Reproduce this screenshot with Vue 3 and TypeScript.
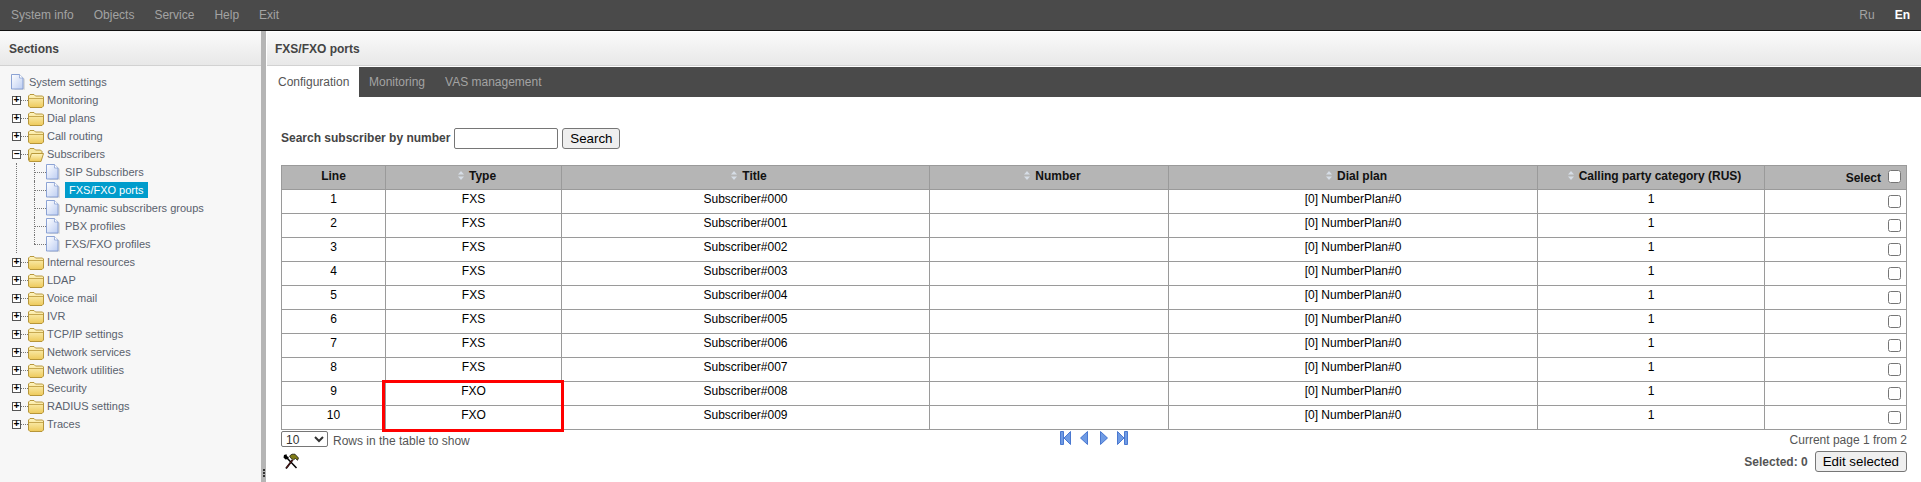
<script setup lang="ts">
const menu = ['System info', 'Objects', 'Service', 'Help', 'Exit']
const before = ['Monitoring', 'Dial plans', 'Call routing']
const children = ['SIP Subscribers', 'FXS/FXO ports', 'Dynamic subscribers groups', 'PBX profiles', 'FXS/FXO profiles']
const after = ['Internal resources', 'LDAP', 'Voice mail', 'IVR', 'TCP/IP settings', 'Network services', 'Network utilities', 'Security', 'RADIUS settings', 'Traces']
const rows = Array.from({ length: 10 }, (_, i) => ({
  line: i + 1,
  type: i < 8 ? 'FXS' : 'FXO',
  title: 'Subscriber#00' + i
}))
const cols = [
  { name: 'Line', w: 104, sort: false },
  { name: 'Type', w: 176, sort: true },
  { name: 'Title', w: 368, sort: true },
  { name: 'Number', w: 239, sort: true },
  { name: 'Dial plan', w: 369, sort: true },
  { name: 'Calling party category (RUS)', w: 227, sort: true }
]
</script>

<template>
  <div class="page">
    <header class="topbar">
      <nav class="menu"><span v-for="m in menu" :key="m">{{ m }}</span></nav>
      <div class="langs"><span>Ru</span><b>En</b></div>
    </header>
    <div class="main">
      <aside class="side">
        <div class="side-head">Sections</div>
        <div class="tree">
          <div class="row root">
            <svg class="doc" viewBox="0 0 14 16"><use href="#doc-shape" /></svg>
            <span class="lbl">System settings</span>
          </div>
          <div v-for="n in before" :key="n" class="row">
            <span class="box">+</span><i class="dots"></i>
            <svg class="folder" viewBox="0 0 16 14"><use href="#folder-shape" /></svg>
            <span class="lbl">{{ n }}</span>
          </div>
          <div class="row">
            <span class="box minus">−</span><i class="dots"></i>
            <svg class="folder" viewBox="0 0 16 14"><use href="#folder-open" /></svg>
            <span class="lbl">Subscribers</span>
          </div>
          <div class="kids">
            <div v-for="(c, i) in children" :key="c" class="kid" :class="{ last: i === children.length - 1 }">
              <i class="conn"></i>
              <svg class="doc" viewBox="0 0 14 16"><use href="#doc-shape" /></svg>
              <span class="lbl" :class="{ sel: i === 1 }">{{ c }}</span>
            </div>
          </div>
          <div v-for="n in after" :key="n" class="row">
            <span class="box">+</span><i class="dots"></i>
            <svg class="folder" viewBox="0 0 16 14"><use href="#folder-shape" /></svg>
            <span class="lbl">{{ n }}</span>
          </div>
        </div>
      </aside>
      <div class="split"><i class="grip"></i></div>
      <main class="content">
        <div class="title">FXS/FXO ports</div>
        <div class="tabs">
          <span class="tab active">Configuration</span>
          <div class="tabrest"><span class="tab">Monitoring</span><span class="tab">VAS management</span></div>
        </div>
        <div class="body">
          <form class="search" @submit.prevent>
            <b>Search subscriber by number</b>
            <input type="text" class="sinput" />
            <button class="btn sbtn">Search</button>
          </form>
          <div class="tablewrap">
            <table>
              <colgroup>
                <col v-for="c in cols" :key="c.name" :style="{ width: c.w + 'px' }" />
                <col />
              </colgroup>
              <thead>
                <tr>
                  <th v-for="c in cols" :key="c.name" :class="{ sorted: c.sort }">
                    <svg v-if="c.sort" class="sort" viewBox="0 0 6 9"><path d="M3 0 6 3.5H0zM3 9 0 5.500h6z" /></svg>{{ c.name }}
                  </th>
                  <th class="selcol"><span>Select</span><input type="checkbox" class="chk" /></th>
                </tr>
              </thead>
              <tbody>
                <tr v-for="r in rows" :key="r.line">
                  <td>{{ r.line }}</td>
                  <td>{{ r.type }}</td>
                  <td>{{ r.title }}</td>
                  <td></td>
                  <td>[0] NumberPlan#0</td>
                  <td>1</td>
                  <td class="selcell"><input type="checkbox" class="chk" /></td>
                </tr>
              </tbody>
            </table>
            <div class="mark"></div>
          </div>
          <div class="foot">
            <div class="foot-l">
              <div class="rowsel">
                <select class="pagesize"><option>10</option></select>
                <span>Rows in the table to show</span>
              </div>
              <svg class="tools" viewBox="0 0 16 16">
                <path d="M4 4.500 13.500 14.500" stroke="#000" stroke-width="1.500" fill="none" />
                <path d="M3.500 .8 1 1.500 .5 4 2.500 6 5 5.500 5.800 3.500 4 2.800z" fill="#000" />
                <path d="M9.500 6.500 3 15" stroke="#000" stroke-width="1.900" fill="none" />
                <path d="M9.500 6.500 3.300 14.500" stroke="#8c1c1c" stroke-width=".7" fill="none" />
                <path d="M6.500 2.500 9 .7 12 .7 15.500 4.500 14.500 6.800 12.500 5 10.500 6.300 8.500 5.300z" fill="#807c18" stroke="#000" stroke-width=".7" />
              </svg>
            </div>
            <div class="pager">
              <svg class="wide" viewBox="0 0 11 14"><path class="pg" d="M.5.5h3v13h-3zM10.500.5v13L4 7z" /></svg>
              <svg class="nar" viewBox="0 0 8 14"><path class="pg" d="M7.500.5v13L.5 7z" /></svg>
              <svg class="nar n2" viewBox="0 0 8 14"><path class="pg" d="M.5.5v13l7-6.500z" /></svg>
              <svg class="wide" viewBox="0 0 11 14"><path class="pg" d="M10.500.5h-3v13h3zM.5.5v13L7 7z" /></svg>
            </div>
            <div class="foot-r">
              <div class="cur">Current page 1 from 2</div>
              <div class="edit"><b>Selected: 0</b><button class="btn">Edit selected</button></div>
            </div>
          </div>
        </div>
      </main>
    </div>
    <svg class="defs" width="0" height="0">
      <defs>
        <linearGradient id="dg" x1="0" y1="0" x2="1" y2="1"><stop offset="0" stop-color="#fff" /><stop offset="1" stop-color="#bccdf2" /></linearGradient>
        <linearGradient id="fg" x1="0" y1="0" x2="0" y2="1"><stop offset="0" stop-color="#fff6c4" /><stop offset="1" stop-color="#edc95a" /></linearGradient>
        <symbol id="doc-shape" viewBox="0 0 14 16">
          <path d="M2.500 1.500h7l3.500 3.500v10.500h-10.500z" fill="#cfcfcf" opacity=".7" transform="translate(1 .3)" />
          <path d="M.5.5h8l3.500 3.500v11H.5z" fill="url(#dg)" stroke="#7f98cf" stroke-width=".9" />
          <path d="M8.500.5v3.500h3.500" fill="#fff" stroke="#7f98cf" stroke-width=".7" />
        </symbol>
        <symbol id="folder-shape" viewBox="0 0 16 14">
          <path d="M.5 12V2L2 .5h4L7.500 2h7L15.500 3v9l-1.500 1.500H2z" fill="url(#fg)" stroke="#b08d2c" stroke-width=".9" />
          <path d="M1 4.500h14" stroke="#b08d2c" stroke-width=".7" />
        </symbol>
        <symbol id="folder-open" viewBox="0 0 16 14">
          <path d="M.5 12V2L2 .5h4L7.500 2h5L14 3.500V5" fill="#f6e7a2" stroke="#b08d2c" stroke-width=".9" />
          <path d="M.8 13 3.500 5.500h12L13 13.500H2z" fill="url(#fg)" stroke="#b08d2c" stroke-width=".9" />
        </symbol>
      </defs>
    </svg>
  </div>
</template>

<style>
html, body { margin: 0; background: #fff; overflow: hidden; }
</style>

<style scoped>
.page { width: 100%; height: 482px; display: flex; flex-direction: column; overflow: hidden; font: 12px "Liberation Sans", Arial, sans-serif; color: #444; background: #fff; }
.defs { position: absolute; }
.topbar { height: 30px; flex: none; background: #4a4a4a; border-bottom: 1px solid #111; display: flex; justify-content: space-between; align-items: center; color: #a3a3a3; }
.menu { display: flex; gap: 20px; padding-left: 11px; }
.langs { display: flex; gap: 20px; padding-right: 11px; }
.langs b { color: #fff; }
.main { flex: 1; display: flex; min-height: 0; }
.side { width: 261px; flex: none; background: #f7f7f7; }
.side-head { height: 34px; margin-top: 1px; box-sizing: border-box; padding-left: 9px; line-height: 34px; font-weight: bold; color: #444; background: linear-gradient(#fafafa, #e8e8e8); border-bottom: 1px solid #d2d2d2; }
.tree { padding-top: 7px; font-size: 11px; color: #59616d; }
.row, .kid { height: 18px; display: flex; align-items: center; }
.row { padding-left: 12px; }
.row.root { padding-left: 11px; }
.box { width: 7px; height: 7px; border: 1px solid #555; background: #fff; color: #000; font: bold 10px/7px "Liberation Mono", monospace; text-align: center; flex: none; }
.dots { width: 7px; border-top: 1px dotted #777; flex: none; }
.folder { width: 16px; height: 14px; flex: none; margin-top: 1px; }
.row .lbl { margin-left: 3px; }
.row.root .lbl { margin-left: 4px; }
.doc { width: 14px; height: 16px; flex: none; }
.kids { margin-left: 16px; padding-left: 17px; border-left: 1px dotted #777; height: 90px; }
.kid { position: relative; }
.conn { width: 12px; height: 18px; flex: none; position: relative; }
.conn::before { content: ""; position: absolute; left: 0; top: 0; bottom: 0; border-left: 1px dotted #777; }
.conn::after { content: ""; position: absolute; left: 0; top: 9px; width: 12px; border-top: 1px dotted #777; }
.last .conn::before { bottom: 9px; }
.kid .lbl { margin-left: 5px; }
.kid .lbl.sel { background: #009ccc; color: #fff; padding: 0 4px; line-height: 16px; }
.split { width: 5px; margin-right: 1px; flex: none; background: #b5b5b5; position: relative; }
.grip { position: absolute; left: 2px; bottom: 5px; width: 2px; height: 8px; background: repeating-linear-gradient(#333 0 2px, transparent 2px 3px); }
.content { flex: 1; min-width: 0; }
.title { height: 34px; margin-top: 1px; box-sizing: border-box; padding-left: 8px; line-height: 34px; font-weight: bold; background: linear-gradient(#fafafa, #e8e8e8); border-bottom: 1px solid #d2d2d2; }
.tabs { display: flex; height: 30px; margin-top: 1px; }
.tab { line-height: 30px; }
.tab.active { background: #fff; color: #555; width: 81px; padding: 0 0 0 11px; }
.tabrest { flex: 1; background: #4a4a4a; color: #a3a3a3; display: flex; }
.tabrest .tab { padding: 0 10px; }
.body { padding: 0 14px; }
.search { height: 68px; display: flex; align-items: center; padding-top: 14px; box-sizing: border-box; }
.sinput { width: 104px; height: 21px; box-sizing: border-box; margin: 0 4px; border: 1px solid #767676; border-radius: 2px; padding: 0; }
.btn { font: 13.33px "Liberation Sans", Arial, sans-serif; color: #000; height: 21px; padding: 0 7px; background: #efefef; border: 1px solid #767676; border-radius: 3px; }
.sbtn { width: 58px; padding: 0; }
.tablewrap { position: relative; }
table { width: 100%; table-layout: fixed; border-collapse: collapse; color: #000; }
th, td { border: 1px solid #9a9a9a; text-align: center; padding: 0; }
th { height: 23px; background: #b5b5b5; font-weight: bold; color: #111; line-height: 20px; vertical-align: top; }
th.sorted { padding-left: 7px; }
td { height: 23px; vertical-align: top; line-height: 18px; }
.sort { width: 6px; height: 9px; fill: #d6dde6; margin-right: 5px; }
.selcol { text-align: right; padding-right: 5px; }
.selcol span { position: relative; top: 2px; margin-right: 7px; }
.selcell { text-align: right; padding-right: 5px; }
.chk { width: 13px; height: 13px; margin: 0; vertical-align: top; }
.selcol .chk { margin-top: 4px; }
.selcell .chk { margin-top: 5px; display: inline-block; }
.mark { position: absolute; left: 101px; top: 215px; width: 176px; height: 46px; border: 3px solid #f00; }
.foot { display: grid; grid-template-columns: 1fr auto 1fr; color: #555; }
.rowsel { display: flex; align-items: center; gap: 5px; height: 22px; }
.pagesize { width: 47px; height: 16px; box-sizing: border-box; font: 12px "Liberation Sans", Arial, sans-serif; padding: 0; border: 1px solid #767676; border-radius: 2px; background: #fff; color: #333; margin-top: -4px; }
.tools { display: block; width: 16px; height: 17px; margin: 1px 0 0 2px; }
.pager { display: flex; align-items: flex-start; padding-top: 1px; }
.pager svg { height: 14px; flex: none; margin-left: 9px; }
.pager svg:first-child { margin-left: 0; }
.pager .wide { width: 11px; }
.pager .nar { width: 8px; }
.pager .n2 { margin-left: 12px; }
.pg { fill: #6f9be4; stroke: #2f62c8; stroke-width: .8; }
.foot-r { text-align: right; }
.cur { height: 21px; line-height: 21px; }
.edit { display: flex; justify-content: flex-end; align-items: center; gap: 7px; }
</style>
